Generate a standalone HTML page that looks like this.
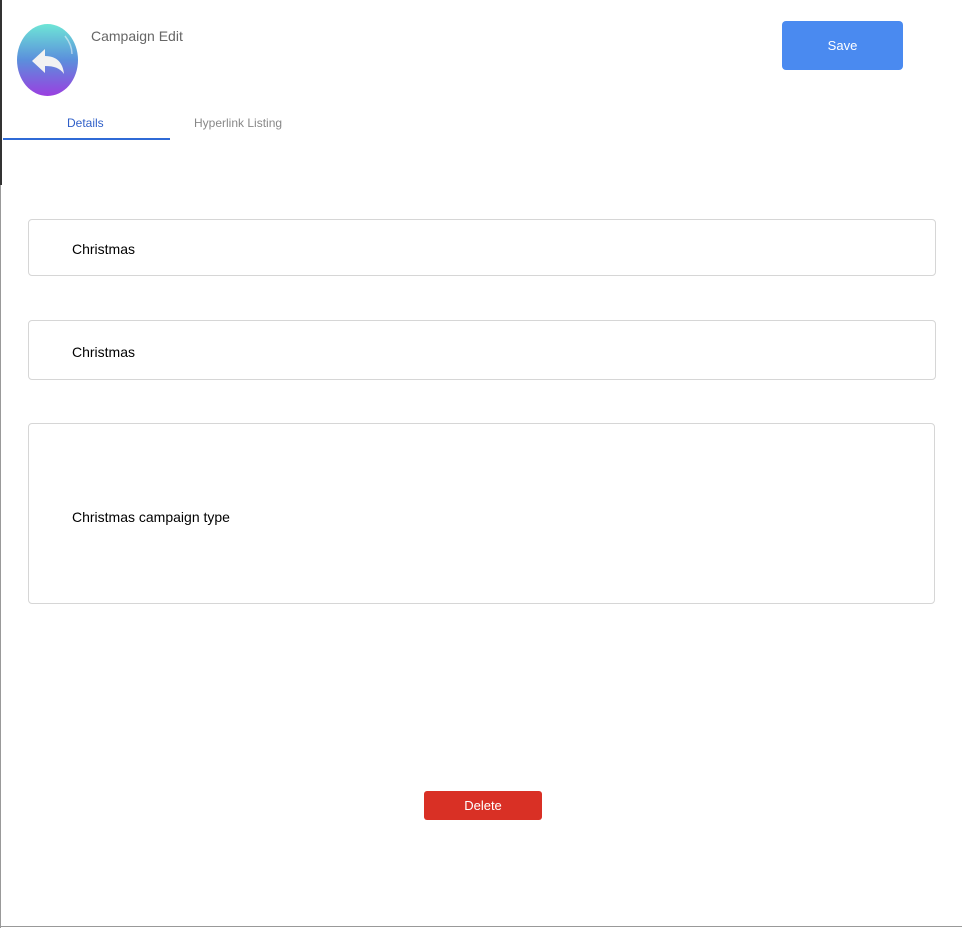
<!DOCTYPE html>
<html><head><style>
html,body{margin:0;padding:0;background:#fff;width:962px;height:928px;overflow:hidden;font-family:"Liberation Sans",sans-serif;}
.lb1{position:absolute;left:0;top:0;width:2px;height:185px;background:#333;}
.lb2{position:absolute;left:0;top:185px;width:1px;height:743px;background:#999;}
.bb{position:absolute;left:0;top:926px;width:962px;height:1px;background:#999;}
.av{position:absolute;left:17px;top:24px;width:61px;height:72px;border-radius:50%;background:linear-gradient(#6ee5d6,#5b8fdc 50%,#9a3fe0);}
.title{position:absolute;left:91px;top:28px;font-size:14px;color:#666;}
.save{position:absolute;left:782px;top:21px;width:121px;height:49px;background:#4a8af0;border-radius:4px;color:#fff;font-size:13px;text-align:center;line-height:49px;}
.tab{position:absolute;top:116px;font-size:12px;}
.ul{position:absolute;left:3px;top:138px;width:167px;height:2px;background:#2f6ad6;}
.box{position:absolute;left:28px;width:906px;border:1px solid #d6d6d6;border-radius:4px;font-size:14px;color:#000;}
.box span{position:absolute;left:43px;}
.del{position:absolute;left:424px;top:791px;width:118px;height:29px;background:#d93025;border-radius:3px;color:#fff;font-size:13px;text-align:center;line-height:29px;}
</style></head><body>
<div class="lb1"></div><div class="lb2"></div><div class="bb"></div>
<div class="av"><svg width="61" height="72" viewBox="0 0 61 72"><path d="M15 37 L28 25 L28 32 C40 32 46 39 47 50 C43 44 37 42 28 42 L28 49 Z" fill="#f2f2f2"/><path d="M48 12 C52 17 55 23 55 30" stroke="#fff" stroke-opacity=".5" stroke-width="1.5" fill="none"/></svg></div>
<div class="title">Campaign Edit</div>
<div class="save">Save</div>
<div class="tab" style="left:67px;color:#2f5fc8">Details</div>
<div class="tab" style="left:194px;color:#888">Hyperlink Listing</div>
<div class="ul"></div>
<div class="box" style="top:219px;height:55px"><span style="top:21px">Christmas</span></div>
<div class="box" style="top:320px;height:58px"><span style="top:23px">Christmas</span></div>
<div class="box" style="top:423px;height:179px;width:905px"><span style="top:85px">Christmas campaign type</span></div>
<div class="del">Delete</div>
</body></html>
